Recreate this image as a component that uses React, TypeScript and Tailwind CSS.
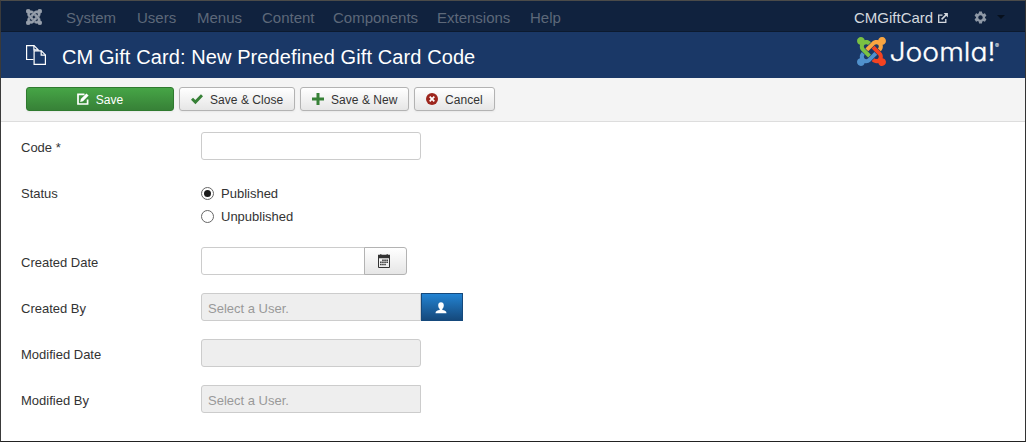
import type { ReactNode } from "react";
import { MdSettings } from "react-icons/md";

const petals = [
  { fill: "#7ac143", d: "M.6 92.1C.6 58.8 27.4 32 60.4 32c30 0 54.5 21.9 59.2 50.2 32.6-7.6 67.1.6 96.5 30l-44.3 44.3c-20.5-20.5-42.6-16.3-55.4-3.5-14.3 14.3-14.3 37.9 0 52.2l99.5 99.5-44 44.3c-87.7-87.2-49.7-49.7-99.8-99.7-26.8-26.5-35-64.8-24.8-98.9C20.4 144.6.6 120.7.6 92.1z" },
  { fill: "#f9a541", d: "M130.1 208.5l44.3 44.3c10-10 89.7-89.7 99.7-99.8 14.3-14.3 37.6-14.3 51.9 0 12.8 12.8 17 35-3.5 55.4l44 44.3c31.2-31.2 38.5-67.6 28.9-101.2 29.2-4.1 51.9-29.2 51.9-59.5 0-33.2-26.8-60.1-59.8-60.1-30.3 0-55.4 22.5-59.5 51.6-33.8-9.9-71.7-1.5-98.3 25.1-18.3 19.1-71.1 71.5-99.6 99.9z" },
  { fill: "#f44321", d: "M396.4 360.7c8.2-32.7-.9-68.5-26.3-93.9-11.8-12.2 5 4.7-99.5-99.7l-44.3 44.3 99.7 99.7c14.3 14.3 14.3 37.6 0 51.9-12.8 12.8-35 17-55.4-3.5l-44 44.3c27.6 30.2 68 38.8 102.7 28 5.5 27.4 29.7 48.1 58.9 48.1 33 0 59.8-26.8 59.8-60.1 0-30.2-22.5-55-51.6-59.1z" },
  { fill: "#5091cd", d: "M312.1 307.6l-44-44.3c-87 86.4-50.4 50.4-99.7 99.8-14.3 14.3-37.6 14.3-51.9 0-13.1-13.4-16.9-35.3 3.2-55.4l-44-44.3c-30.2 30.2-38 65.2-29.5 98.3-26.7 6-46.2 29.9-46.2 58.2C0 453.2 26.8 480 59.8 480c28.6 0 52.5-19.8 58.6-46.7 32.7 8.2 68.5-.6 94.2-26 32.1-32 12.2-12.4 99.5-99.7z" },
];

function JoomlaMark({ className, mono }: { className: string; mono?: string }) {
  return (
    <svg viewBox="0 32 448 448" className={className}>
      {petals.map((p) => (
        <path key={p.fill} d={p.d} fill={mono ?? p.fill} stroke={mono} strokeWidth={mono ? 14 : undefined} />
      ))}
    </svg>
  );
}

function PagesIcon() {
  return (
    <svg viewBox="0 0 20 20" className="block h-5 w-5 shrink-0" fill="none" stroke="#fff" strokeWidth="1.2">
      <path d="M7.500 14.500H.6V.6h7.400l4.100 4.100v1.400" />
      <path d="M7.900.6v4.300h4.200" />
      <path d="M8.100 5.800h7.200l4.100 4.100v9.500H8.100z" fill="#1a3867" />
      <path d="M15.200 5.800v4.300h4.200" />
    </svg>
  );
}

function EditIcon() {
  return (
    <svg viewBox="0 0 12 12" className="block h-3 w-3">
      <path d="M7.500 1.400H1v9.600h9.600V6.500" fill="none" stroke="#fff" strokeWidth="1.700" />
      <path d="M3.200 8.900l.6-2.900L9.400.4l2.200 2.200L6 8.300z" fill="#fff" />
    </svg>
  );
}

function CheckIcon() {
  return (
    <svg viewBox="0 0 12 12" className="block h-3 w-3">
      <path d="M1 5.800l3.400 3.300L11 2.300" fill="none" stroke="#378137" strokeWidth="2.900" />
    </svg>
  );
}

function PlusIcon() {
  return (
    <svg viewBox="0 0 12 12" className="block h-3 w-3">
      <path d="M4.500 0h3v4.500H12v3H7.500V12h-3V7.500H0v-3h4.500z" fill="#378137" />
    </svg>
  );
}

function CancelIcon() {
  return (
    <svg viewBox="0 0 12 12" className="block h-3 w-3">
      <circle cx="6" cy="6" r="6" fill="#9d261d" />
      <path d="M3.700 3.700l4.600 4.600M8.300 3.700L3.700 8.300" stroke="#fff" strokeWidth="1.700" />
    </svg>
  );
}

function ExternalIcon() {
  return (
    <svg viewBox="0 0 10 10" className="block h-[10px] w-[10px]" fill="none" stroke="#d5d9df">
      <path d="M4.500 2.200H.7v7.100h7.100V6" strokeWidth="1.300" />
      <path d="M3.600 6.400L8.600 1.400" strokeWidth="1.500" />
      <path d="M5.600.1h4.300v4.300z" fill="#d5d9df" stroke="none" />
    </svg>
  );
}

function CalendarIcon() {
  return (
    <svg viewBox="0 0 12 14" className="block h-[14px] w-3" fill="#333">
      <path d="M0 .8h2V.3h1.500v.5h5V.3H10v.5h2v3.400H0z" />
      <path d="M.5 3v10.500h11V3" fill="none" stroke="#333" />
      <path d="M4.200 5.500H5.700V7H4.200zM6.300 5.500H7.800V7H6.300zM8.400 5.500H9.900V7H8.400zM2.100 7.600H3.600V9.100H2.100zM4.200 7.600H5.700V9.100H4.200zM6.300 7.600H7.800V9.100H6.300zM8.400 7.600H9.900V9.100H8.400zM2.100 9.700H3.600V11.200H2.100zM4.200 9.700H5.700V11.200H4.200zM6.300 9.700H7.800V11.200H6.300z" />
    </svg>
  );
}

function UserIcon() {
  return (
    <svg viewBox="0 0 12 12" className="block h-3 w-3" fill="#fff">
      <path d="M6 .3c1.700 0 2.800 1.100 2.800 2.900 0 1.500-.6 3-1.500 3.700v1.200c2.400.3 4.200 1.100 4.200 3.100H.5c0-2 1.800-2.800 4.200-3.100V6.900C3.800 6.200 3.200 4.700 3.200 3.200 3.200 1.400 4.300.3 6 .3z" />
    </svg>
  );
}

function ToolButton({ icon, label, className }: { icon: ReactNode; label: string; className: string }) {
  return (
    <button className={`flex h-6 items-center gap-[7px] rounded-[3px] border text-[12px] leading-[21px] tracking-[0.05px] whitespace-nowrap shadow-[0_1px_2px_rgba(0,0,0,0.05)] ${className}`}>
      {icon}
      <span className="pt-[2px]">{label}</span>
    </button>
  );
}

const light = "border-[#b3b3b3] bg-linear-to-b from-white to-[#e6e6e6] text-[#333] pl-[11px]";

function Row({ label, children, className = "h-[46px]" }: { label: string; children: ReactNode; className?: string }) {
  return (
    <div className={`flex items-start ${className}`}>
      <label className="w-[180px] shrink-0 pt-[7px] leading-[18px]">{label}</label>
      {children}
    </div>
  );
}

function Radio({ label, checked }: { label: string; checked?: boolean }) {
  return (
    <label className="flex h-[23px] items-center gap-[7px] leading-[18px]">
      <span className="flex h-[13px] w-[13px] items-center justify-center rounded-full border border-[#666] bg-white">
        {checked && <span className="h-[7px] w-[7px] rounded-full bg-[#1c1c1c]" />}
      </span>
      {label}
    </label>
  );
}

const field = "h-7 border border-[#ccc] px-[6px] pt-[2px] text-[13px] outline-none placeholder:text-[#999] placeholder:opacity-100";

const menu = [
  { label: "System", w: "w-[71px]" },
  { label: "Users", w: "w-[60px]" },
  { label: "Menus", w: "w-[65px]" },
  { label: "Content", w: "w-[71px]" },
  { label: "Components", w: "w-[104px]" },
  { label: "Extensions", w: "w-[93px]" },
  { label: "Help", w: "w-[40px]" },
];

export default function App() {
  return (
    <div className="flex h-[442px] w-[1026px] flex-col border border-t-[#4b4b49] border-r-[#333] border-b-[#222] border-l-[#3a3a3a] bg-white font-['Liberation_Sans',Arial,sans-serif] text-[13px] text-[#333]">
      <nav className="flex h-[31px] shrink-0 items-center border-b border-[#0c1a2f] bg-[#10223e] pl-[25px] text-[15px] text-[#5d6879]">
        <JoomlaMark className="mt-[2px] block h-4 w-4" mono="#969fab" />
        <div className="flex flex-1 pt-[3px] pl-6 leading-[18px]">
          {menu.map((m) => (
            <span key={m.label} className={m.w}>{m.label}</span>
          ))}
        </div>
        <div className="flex items-center gap-1 pt-[3px] leading-[18px] text-[#d5d9df]">
          <span className="w-[80px]">CMGiftCard</span>
          <ExternalIcon />
        </div>
        <MdSettings className="mt-[2px] ml-[25px] block h-[15px] w-[15px] text-[#8e98a6]" />
        <span className="mt-[2px] mr-[20px] ml-[9px] border-x-4 border-t-4 border-x-transparent border-t-[#07101d]" />
      </nav>

      <header className="flex h-[46px] shrink-0 items-center bg-[#1a3867] pl-[25px] text-white">
        <PagesIcon />
        <h1 className="flex-1 pt-[3px] pl-4 text-[20px] leading-6 tracking-[0.1px]">CM Gift Card: New Predefined Gift Card Code</h1>
        <div className="mr-[23px] flex h-[34px] items-start self-start pt-1">
          <JoomlaMark className="mt-[1px] block h-[29px] w-[29px]" />
          <svg className="ml-1 block h-8 w-[112px]" viewBox="0 0 112 32" fill="#fff">
            <text x="-.5" y="24.500" fontSize="25" fontWeight="300" stroke="#fff" strokeWidth=".3" textLength="106" lengthAdjust="spacingAndGlyphs" className="font-['Inter',sans-serif] [font-feature-settings:'cv11'_1]">Joomla!</text>
            <text x="105" y="12" fontSize="6" className="font-['Inter',sans-serif]">®</text>
          </svg>
        </div>
      </header>

      <div className="flex h-[44px] shrink-0 gap-[5px] border-b border-[#ddd] bg-[#f4f4f4] pt-[9px] pl-[25px]">
        <ToolButton icon={<EditIcon />} label="Save" className="w-[148px] justify-center border-[#2f7a2f] bg-linear-to-b from-[#46a546] to-[#378137] text-white" />
        <ToolButton icon={<CheckIcon />} label="Save & Close" className={`w-[116px] ${light}`} />
        <ToolButton icon={<PlusIcon />} label="Save & New" className={`w-[109px] ${light}`} />
        <ToolButton icon={<CancelIcon />} label="Cancel" className={`w-[81px] ${light}`} />
      </div>

      <main className="px-5 pt-[10px]">
        <Row label="Code *">
          <input className={`${field} w-[220px] rounded-[3px]`} />
        </Row>
        <Row label="Status" className="h-[69px]">
          <div className="flex flex-col pt-[4px]">
            <Radio label="Published" checked />
            <Radio label="Unpublished" />
          </div>
        </Row>
        <Row label="Created Date">
          <input className={`${field} w-[164px] rounded-l-[3px]`} />
          <button className="-ml-px flex h-7 w-[43px] items-center justify-center rounded-r-[3px] border border-[#b3b3b3] bg-linear-to-b from-white to-[#e6e6e6] pr-[3px]">
            <CalendarIcon />
          </button>
        </Row>
        <Row label="Created By">
          <input className={`${field} w-[220px] rounded-l-[3px] bg-[#eee]`} placeholder="Select a User." readOnly />
          <button className="flex h-7 w-[42px] items-center justify-center border border-[#15497c] bg-linear-to-b from-[#2384d3] to-[#15497c] pt-[1px] pr-[3px]">
            <UserIcon />
          </button>
        </Row>
        <Row label="Modified Date">
          <input className={`${field} w-[220px] rounded-[3px] bg-[#eee]`} readOnly />
        </Row>
        <Row label="Modified By">
          <input className={`${field} w-[220px] rounded-l-[3px] bg-[#eee]`} placeholder="Select a User." readOnly />
        </Row>
      </main>
    </div>
  );
}
